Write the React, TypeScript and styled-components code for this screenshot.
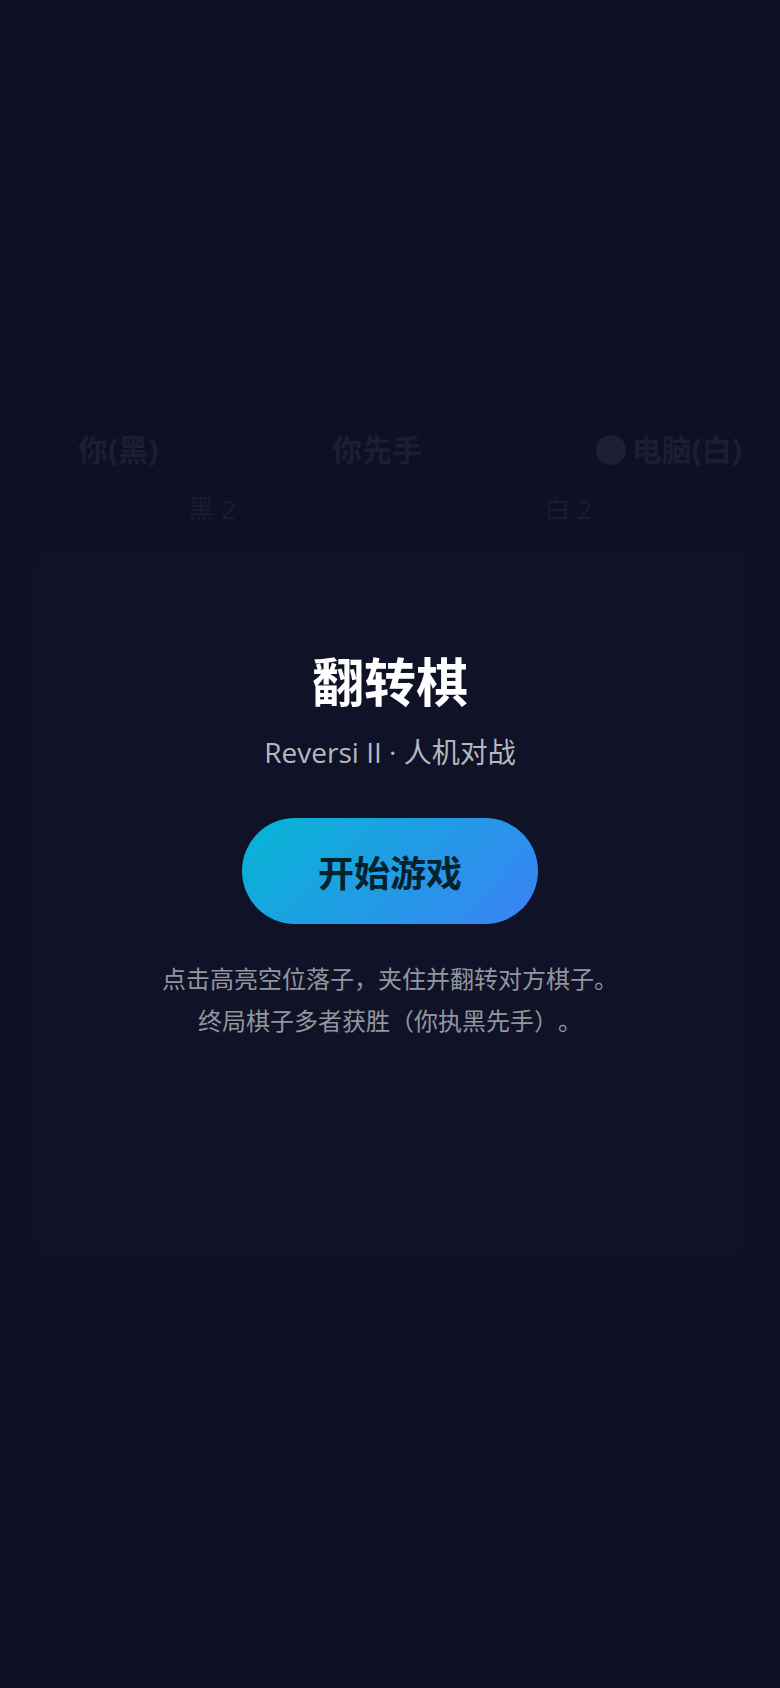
import React from "react";
import styled, { createGlobalStyle } from "styled-components";

const GlobalStyle = createGlobalStyle`
  * { box-sizing: border-box; }
  body {
    margin: 0;
    background: #0e1024;
    font-family: "Open Sans", "Noto Sans CJK SC", sans-serif;
    text-spacing-trim: space-all;
  }
  h1, p { margin: 0; }
`;

const Page = styled.div`
  position: relative;
  min-height: 100vh;
  display: flex;
  flex-direction: column;
  justify-content: center;
  padding: 0 34px;
`;

const PlayerBar = styled.header`
  display: flex;
  justify-content: space-between;
  align-items: center;
  height: 42px;
  padding: 0 4px 0 8px;
  color: #1c1f31;
  font-size: 30px;
  line-height: 42px;
  font-weight: 700;
`;

const Player = styled.div`
  display: flex;
  align-items: center;
  gap: 6px;
`;

const Disc = styled.span<{ $side: "black" | "white" }>`
  width: 30px;
  height: 30px;
  border-radius: 50%;
  background: ${({ $side }) => ($side === "black" ? "#0d1022" : "#1d2032")};
`;

const ScoreBar = styled.div`
  display: grid;
  grid-template-columns: 1fr 1fr;
  margin: 20px 0;
  color: #1a1d2f;
  font-size: 26px;
  line-height: 36px;
  text-align: center;
`;

const Board = styled.main`
  aspect-ratio: 1;
  border-radius: 20px;
  background: #101228;
`;

const StartScreen = styled.section`
  position: absolute;
  inset: 0;
  display: flex;
  flex-direction: column;
  align-items: center;
  justify-content: center;
  text-align: center;
`;

const Title = styled.h1`
  color: #fff;
  font-size: 52px;
  line-height: 72px;
  font-weight: 700;
`;

const Subtitle = styled.p`
  margin-top: 16px;
  color: #b7b8be;
  font-size: 28px;
  line-height: 36px;
`;

const StartButton = styled.button`
  height: 106px;
  margin: 48px 0 34px;
  padding: 0 76px;
  border: 0;
  border-radius: 999px;
  background: linear-gradient(135deg, #06b6d4, #3b82f6);
  color: #04222b;
  font: inherit;
  font-size: 36px;
  font-weight: 700;
  cursor: pointer;
`;

const Rules = styled.p`
  color: #94959d;
  font-size: 24px;
  line-height: 42px;
`;

export default function App() {
  return (
    <>
      <GlobalStyle />
      <Page lang="zh-CN">
        <PlayerBar>
          <Player>
            <Disc $side="black" />
            你(黑)
          </Player>
          <span>你先手</span>
          <Player>
            <Disc $side="white" />
            电脑(白)
          </Player>
        </PlayerBar>
        <ScoreBar>
          <span>黑 2</span>
          <span>白 2</span>
        </ScoreBar>
        <Board />
        <StartScreen>
          <Title>翻转棋</Title>
          <Subtitle>Reversi II · 人机对战</Subtitle>
          <StartButton type="button">开始游戏</StartButton>
          <Rules>
            点击高亮空位落子，夹住并翻转对方棋子。
            <br />
            终局棋子多者获胜（你执黑先手）。
          </Rules>
        </StartScreen>
      </Page>
    </>
  );
}
